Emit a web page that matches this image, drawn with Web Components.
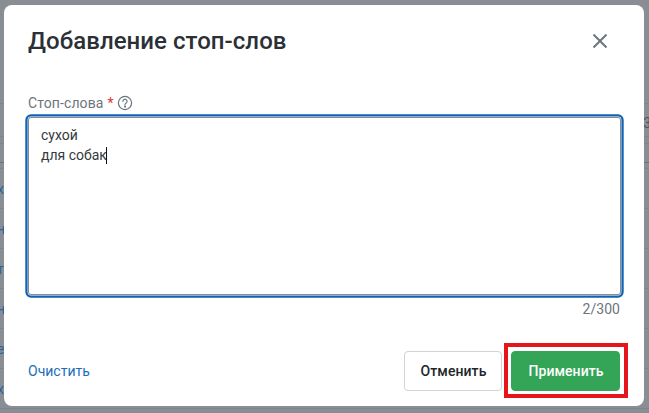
<!DOCTYPE html>
<html lang="ru">
<head>
<meta charset="utf-8">
<title>Добавление стоп-слов</title>
<style>
  html, body { margin: 0; height: 100%; overflow: hidden; }
  body { font-family: Roboto, "Liberation Sans", sans-serif; background: #898d94; }
</style>
</head>
<body>
<page-backdrop></page-backdrop>
<modal-dialog heading="Добавление стоп-слов">
  <text-area-field label="Стоп-слова" counter="2/300">сухой
для собак</text-area-field>
  <a-link slot="footer-start">Очистить</a-link>
  <ui-button slot="footer-end">Отменить</ui-button>
  <ui-button slot="footer-end" variant="primary" marked>Применить</ui-button>
</modal-dialog>

<script>
// затемнённая таблица за модалкой
class PageBackdrop extends HTMLElement {
  connectedCallback() {
    const rows = ["х", "н", "т", "н", "е", "х"];
    this.attachShadow({ mode: "open" });
    this.shadowRoot.innerHTML = `
      <style>
        :host { display: block; height: 413px; overflow: hidden; }
        .head { height: 103px; border-bottom: 1px solid #7f838a; }
        .sub { height: 33px; box-sizing: border-box; padding-top: 5px; display: flex; justify-content: flex-end; align-items: center; border-bottom: 1px solid #7f838a; color: #50555e; font-size: 14px; }
        .sub span { margin-right: -2px; }
        .gap { height: 6px; border-bottom: 1px solid #7f838a; }
        .gap2 { height: 18px; border-bottom: 1px solid #6d7178; }
        .gap3 { height: 5px; border-bottom: 1px solid #7f838a; }
        .row { height: 39px; display: flex; align-items: center; border-bottom: 1px solid #7f838a; color: #2f6597; font-size: 14px; }
        .row span { margin-left: -3px; }
      </style>
      <div class="head"></div>
      <div class="sub"><span>3</span></div>
      <div class="gap"></div>
      <div class="gap2"></div>
      <div class="gap3"></div>
      ${rows.map((r) => `<div class="row"><span>${r}</span></div>`).join("")}
    `;
  }
}

class ModalDialog extends HTMLElement {
  connectedCallback() {
    const heading = this.getAttribute("heading") || "";
    this.attachShadow({ mode: "open" });
    this.shadowRoot.innerHTML = `
      <style>
        :host {
          position: absolute; left: 4px; top: 5px;
          width: 640px; height: 401px;
          box-sizing: border-box;
          display: flex; flex-direction: column;
          background: #fff; border-radius: 8px;
          padding: 20px 24px 15px;
        }
        header { display: flex; justify-content: space-between; align-items: center; height: 32px; margin-bottom: 36px; }
        h2 { margin: 0; font-size: 24px; line-height: 32px; font-weight: 500; letter-spacing: .05px; color: #2b3036; }
        svg { display: block; margin-right: 12px; }
        main { flex: 1; }
        footer { display: flex; justify-content: space-between; align-items: center; }
        .end { display: flex; gap: 9px; }
      </style>
      <header>
        <h2>${heading}</h2>
        <svg width="16" height="16" viewBox="0 0 16 16" fill="none" stroke="#6c757d" stroke-width="2"><path d="M1.5 1.5l13 13M14.5 1.5l-13 13"/></svg>
      </header>
      <main><slot></slot></main>
      <footer>
        <slot name="footer-start"></slot>
        <div class="end"><slot name="footer-end"></slot></div>
      </footer>
    `;
  }
}

class TextAreaField extends HTMLElement {
  connectedCallback() {
    const label = this.getAttribute("label") || "";
    const counter = this.getAttribute("counter") || "";
    const lines = this.textContent.split("\n");
    this.textContent = "";
    this.attachShadow({ mode: "open" });
    this.shadowRoot.innerHTML = `
      <style>
        :host { display: block; font-size: 14px; line-height: 20px; }
        .title { display: flex; align-items: center; gap: 4px; height: 20px; margin-bottom: 4px; color: #6c757d; }
        .title span { letter-spacing: .1px; }
        .title i { font-style: normal; color: #d9363e; }
        .title svg { display: block; margin-left: -1px; }
        .box {
          box-sizing: border-box; height: 178px; width: 593px;
          padding: 7px 12px;
          border: 1px solid #868b91; border-radius: 3px;
          box-shadow: 0 0 0 .4px #fff, 0 0 0 2.7px #0f62b5;
          color: #343a40;
        }
        .caret { display: inline-block; width: 0; height: 17px; border-left: 1px solid #111; vertical-align: -4px; margin-left: -1px; }
        .count { text-align: right; color: #6c757d; margin-top: 4px; letter-spacing: .05px; }
      </style>
      <div class="title">
        <span>${label}</span><i>*</i>
        <svg width="16" height="16" viewBox="0 0 16 16" fill="none" stroke="#6c757d" stroke-width="1.2">
          <circle cx="8" cy="8" r="6.6"/>
          <path d="M5.9 6.3a2.1 2.1 0 1 1 3.3 1.7c-.8.5-1.2.9-1.2 1.7" stroke-linecap="round"/>
          <circle cx="8" cy="11.6" r=".5" fill="#6c757d"/>
        </svg>
      </div>
      <div class="box">${lines.map((l, i) => `<div>${l}${i === lines.length - 1 ? '<span class="caret"></span>' : ""}</div>`).join("")}</div>
      <div class="count">${counter}</div>
    `;
  }
}

class ALink extends HTMLElement {
  connectedCallback() {
    this.attachShadow({ mode: "open" });
    this.shadowRoot.innerHTML = `
      <style>
        :host { display: block; color: #1a6dbb; font-size: 14px; line-height: 20px; cursor: pointer; }
      </style>
      <slot></slot>
    `;
  }
}

class UiButton extends HTMLElement {
  connectedCallback() {
    this.attachShadow({ mode: "open" });
    this.shadowRoot.innerHTML = `
      <style>
        :host {
          position: relative; display: flex; align-items: center; justify-content: center;
          box-sizing: border-box; height: 40px; width: 98px;
          border: 1px solid #ced4da; border-radius: 4px;
          background: #fff; color: #212529;
          font-size: 14px; font-weight: 500; letter-spacing: .07px; padding-left: 1px; cursor: pointer;
        }
        :host([variant="primary"]) { width: 109px; background: #34a556; border-color: #34a556; color: #fff; }
        /* красная рамка поверх скриншота */
        :host([marked])::after {
          content: ""; position: absolute; left: -8px; top: -9px; right: -9px; bottom: -8px;
          border: 4px solid #e5161b;
        }
      </style>
      <slot></slot>
    `;
  }
}

customElements.define("page-backdrop", PageBackdrop);
customElements.define("modal-dialog", ModalDialog);
customElements.define("text-area-field", TextAreaField);
customElements.define("a-link", ALink);
customElements.define("ui-button", UiButton);
</script>
</body>
</html>
